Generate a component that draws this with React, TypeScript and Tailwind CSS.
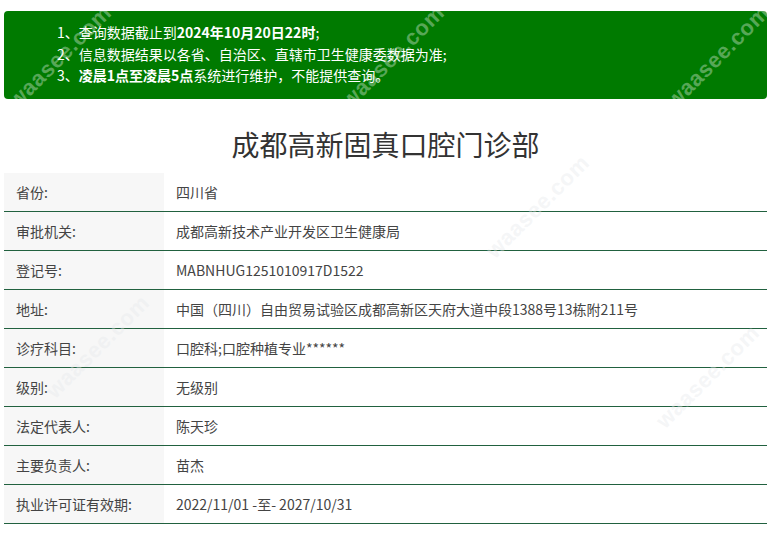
import React from "react";

const rows: [string, string][] = [
  ["省份:", "四川省"],
  ["审批机关:", "成都高新技术产业开发区卫生健康局"],
  ["登记号:", "MABNHUG1251010917D1522"],
  ["地址:", "中国（四川）自由贸易试验区成都高新区天府大道中段1388号13栋附211号"],
  ["诊疗科目:", "口腔科;口腔种植专业******"],
  ["级别:", "无级别"],
  ["法定代表人:", "陈天珍"],
  ["主要负责人:", "苗杰"],
  ["执业许可证有效期:", "2022/11/01 -至- 2027/10/31"],
];

const marks: { x: number; y: number; c: string }[] = [
  { x: -8, y: 40, c: "text-white/35" },
  { x: 325, y: 40, c: "text-white/35" },
  { x: 650, y: 40, c: "text-white/35" },
  { x: 470, y: 190, c: "text-gray-200/40" },
  { x: 30, y: 330, c: "text-gray-200/40" },
  { x: 640, y: 360, c: "text-gray-200/40" },
];

export default function App() {
  return (
    <div
      className="relative w-[778px] h-[543px] overflow-hidden bg-white"
      style={{ fontFamily: '"Noto Sans CJK SC", "Noto Sans", sans-serif' }}
    >
      <div className="w-[763px] ml-[4px] pt-[11px]">
        <div className="h-[88px] rounded-[4px] bg-[#007a00] pl-[53px] pt-[11px] text-[14px] leading-[21.5px] text-white">
          <div>
            1、查询数据截止到<b>2024年10月20日22时</b>;
          </div>
          <div>2、信息数据结果以各省、自治区、直辖市卫生健康委数据为准;</div>
          <div>
            3、<b>凌晨1点至凌晨5点</b>系统进行维护，不能提供查询。
          </div>
        </div>
        <h1 className="mt-[27px] mb-[11px] text-center text-[28px] leading-[36px] text-[#333]">
          成都高新固真口腔门诊部
        </h1>
        <div>
          {rows.map(([k, v]) => (
            <div key={k} className="flex h-[39px] border-b border-[#21613f] text-[14px] text-[#444]">
              <div className="flex w-[160px] items-center bg-[#f7f7f7] pl-[12px]">{k}</div>
              <div className="flex items-center pl-[12px]">{v}</div>
            </div>
          ))}
        </div>
      </div>
      {marks.map((m, i) => (
        <div
          key={i}
          className={`pointer-events-none absolute -rotate-45 text-[22px] font-bold tracking-wide ${m.c}`}
          style={{ left: m.x, top: m.y, fontFamily: '"Liberation Sans", sans-serif' }}
        >
          waasee.com
        </div>
      ))}
    </div>
  );
}
